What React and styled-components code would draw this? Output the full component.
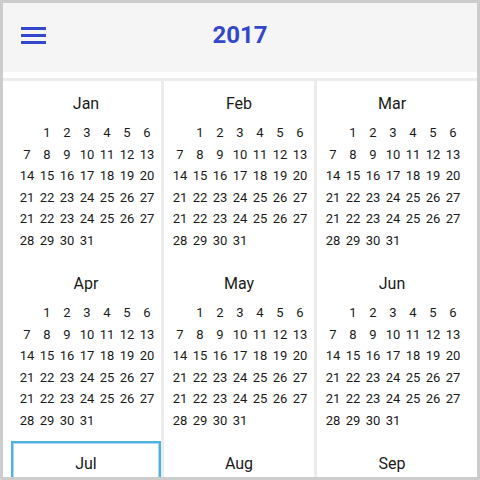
import styled, { createGlobalStyle } from "styled-components"

const Global = createGlobalStyle`
  html, body { margin: 0; padding: 0; background: #fff; }
  body { font-family: Roboto, "Noto Sans", sans-serif; }
`

const months = ["Jan", "Feb", "Mar", "Apr", "May", "Jun", "Jul", "Aug", "Sep"]

const weeks = [
  ["", 1, 2, 3, 4, 5, 6],
  [7, 8, 9, 10, 11, 12, 13],
  [14, 15, 16, 17, 18, 19, 20],
  [21, 22, 23, 24, 25, 26, 27],
  [21, 22, 23, 24, 25, 26, 27],
  [28, 29, 30, 31, "", "", ""],
]

function Month({ name, focused }) {
  return (
    <Cell $focused={focused}>
      <MonthName>{name}</MonthName>
      <Days>
        {weeks.flat().map((d, i) => (
          <Day key={i}>{d}</Day>
        ))}
      </Days>
    </Cell>
  )
}

export default function App() {
  return (
    <Frame>
      <Global />
      <Header>
        <MenuButton>
          <svg width="25" height="18" viewBox="0 0 25 18">
            <rect x="0" y="0" width="25" height="3" fill="#3347cc" />
            <rect x="0" y="7" width="25" height="3" fill="#3347cc" />
            <rect x="0" y="14" width="25" height="3" fill="#3347cc" />
          </svg>
        </MenuButton>
        <Year>2017</Year>
      </Header>
      <Divider />
      <Grid>
        {months.map((m) => (
          <Month key={m} name={m} focused={m === "Jul"} />
        ))}
      </Grid>
    </Frame>
  )
}

const Frame = styled.div`
  width: 480px;
  height: 480px;
  box-sizing: border-box;
  border: 3px solid #cccccc;
  overflow: hidden;
  background: #fff;
`

const Header = styled.div`
  position: relative;
  height: 69px;
  background: #f5f5f5;
  display: flex;
  align-items: center;
  justify-content: center;
`

const MenuButton = styled.div`
  position: absolute;
  left: 18px;
  top: 24px;
  display: flex;
`

const Year = styled.div`
  font-size: 24px;
  font-weight: 700;
  color: #3347cc;
  margin-top: -5px;
`

const Divider = styled.div`
  margin-top: 6px;
  height: 3px;
  background: #ececec;
`

const Grid = styled.div`
  display: grid;
  grid-template-columns: repeat(3, 150px);
  column-gap: 3px;
  row-gap: 0;
  margin-left: 8px;
  width: fit-content;
  background: #ececec;
`

const Cell = styled.div`
  height: 180px;
  box-sizing: border-box;
  background: #fff;
  padding-top: ${(p) => (p.$focused ? "11px" : "13px")};
  border: ${(p) => (p.$focused ? "2px solid #4fb1e2" : "none")};
  box-shadow: ${(p) => (p.$focused ? "inset 0 0 0 1px #a9d9f2" : "none")};
  display: flex;
  flex-direction: column;
  align-items: center;
  color: #1a1a1a;
`

const MonthName = styled.div`
  font-size: 16px;
  line-height: 20px;
  height: 20px;
`

const Days = styled.div`
  margin-top: 8px;
  display: grid;
  grid-template-columns: repeat(7, 20px);
  grid-auto-rows: 21.5px;
  margin-left: 2px;
`

const Day = styled.div`
  font-size: 13px;
  line-height: 21.5px;
  text-align: center;
`
